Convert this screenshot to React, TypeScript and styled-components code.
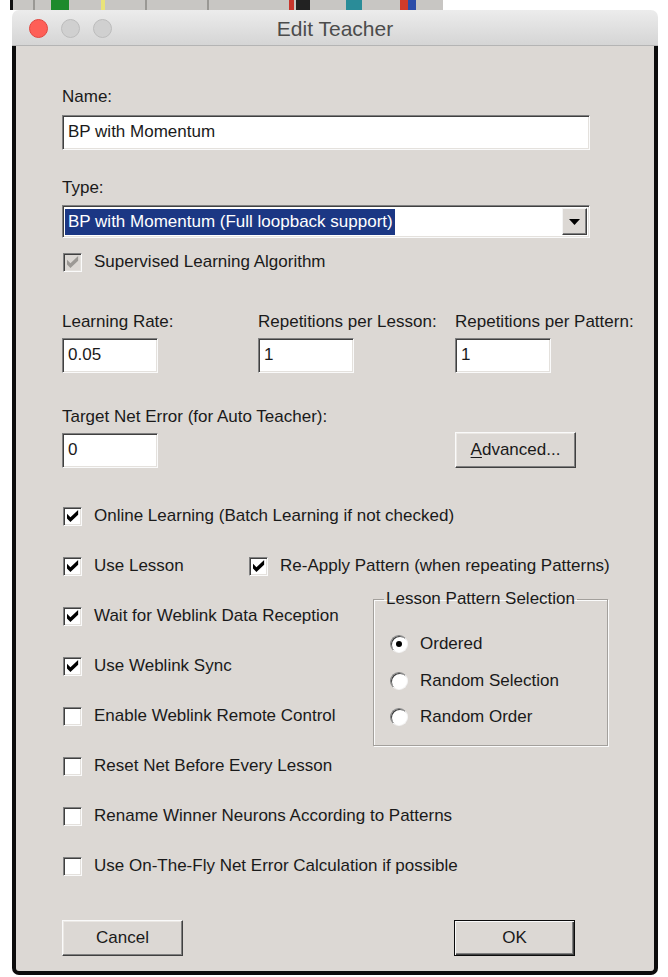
import React from "react";
import styled, { createGlobalStyle, css } from "styled-components";

const GlobalStyle = createGlobalStyle`
  html, body {
    margin: 0;
    background: #fff;
  }
  body {
    font-family: "Liberation Sans", Arial, sans-serif;
    color: #1a1a1a;
  }
`;

const Page = styled.div`
  width: 668px;
  height: 977px;
  overflow: hidden;
`;

// strip of the window sitting behind the dialog
const Backdrop = styled.div`
  display: flex;
  height: 10px;
  width: 430px;
  margin-left: 10px;
  background: #c8c6c3;
  border-left: 3px solid #111;
`;

const Tile = styled.span<{ $color: string; $w: number; $gap: number }>`
  width: ${(p) => p.$w}px;
  margin-left: ${(p) => p.$gap}px;
  background: ${(p) => p.$color};
`;

const Window = styled.div`
  width: 646px;
  margin-left: 12px;
  display: flex;
  flex-direction: column;
`;

const TitleBar = styled.div`
  height: 35px;
  display: grid;
  grid-template-columns: 1fr auto 1fr;
  align-items: center;
  border-radius: 7px 7px 0 0;
  background: linear-gradient(#ececec, #d5d5d5);
  border-bottom: 1px solid #b4b4b4;
`;

const Lights = styled.div`
  display: flex;
  gap: 13px;
  padding: 1px 0 0 17px;
`;

const Light = styled.span<{ $color: string; $edge: string }>`
  width: 19px;
  height: 19px;
  box-sizing: border-box;
  border-radius: 50%;
  background: ${(p) => p.$color};
  border: 1px solid ${(p) => p.$edge};
`;

const Title = styled.div`
  font-family: "Liberation Sans", Arial, sans-serif;
  font-size: 21px;
  color: #4c4c4c;
  padding-top: 2px;
`;

const Body = styled.div`
  height: 929px;
  box-sizing: border-box;
  padding: 41px 0 0 46px;
  background: #dcd8d4;
  border: 4px solid #0c0c0c;
  border-top: none;
  border-radius: 0 0 7px 7px;
  display: flex;
  flex-direction: column;
`;

const Block = styled.div<{ $top: number; $gap?: number }>`
  display: flex;
  flex-direction: column;
  margin-top: ${(p) => p.$top}px;
  gap: ${(p) => p.$gap ?? 0}px;
`;

const Label = styled.div`
  font-size: 17px;
  line-height: 20px;
  white-space: nowrap;
`;

const sunken = css`
  box-sizing: border-box;
  background: #fff;
  border: 1px solid;
  border-color: #808080 #fafafa #fafafa #808080;
  box-shadow: inset 1px 1px #404040, inset -1px -1px #e4e1dd;
`;

const TextField = styled.input<{ $width: number }>`
  ${sunken};
  width: ${(p) => p.$width}px;
  height: 35px;
  padding: 0 0 2px 5px;
  font-family: "Liberation Sans", Arial, sans-serif;
  font-size: 17px;
  color: #1a1a1a;
  outline: none;
`;

const Combo = styled.div`
  ${sunken};
  width: 528px;
  height: 33px;
  display: flex;
  align-items: center;
  justify-content: space-between;
  padding: 0 2px;
`;

const Selected = styled.span`
  background: #1b3784;
  color: #fff;
  font-size: 17px;
  line-height: 26px;
  padding: 0 2px 0 3px;
`;

const DropButton = styled.span`
  width: 25px;
  height: 27px;
  box-sizing: border-box;
  display: flex;
  align-items: center;
  justify-content: center;
  background: #dcd8d4;
  border: 1px solid;
  border-color: #f4f4f4 #404040 #404040 #f4f4f4;
  box-shadow: inset -1px -1px #808080;
`;

const CheckRow = styled.label<{ $height: number; $width?: number }>`
  display: flex;
  align-items: center;
  gap: 12px;
  height: ${(p) => p.$height}px;
  width: ${(p) => (p.$width ? `${p.$width}px` : "auto")};
  padding-left: 1px;
  font-size: 17px;
  white-space: nowrap;
`;

const Box = styled.span<{ $disabled?: boolean }>`
  ${sunken};
  width: 19px;
  height: 19px;
  flex: none;
  display: flex;
  align-items: center;
  justify-content: center;
  background: ${(p) => (p.$disabled ? "#dcd8d4" : "#fff")};
`;

const Columns = styled.div`
  display: grid;
  grid-template-columns: 196px 197px auto;
  margin-top: 38px;
`;

const Column = styled.div`
  display: flex;
  flex-direction: column;
  gap: 6px;
`;

const ErrorRow = styled.div`
  display: grid;
  grid-template-columns: 393px auto;
  align-items: end;
  margin-top: 34px;
`;

const Button = styled.button<{ $default?: boolean }>`
  width: 121px;
  height: 36px;
  box-sizing: border-box;
  background: #dcd8d4;
  font-family: "Liberation Sans", Arial, sans-serif;
  font-size: 17px;
  color: #1a1a1a;
  padding: 0;
  border: 1px solid;
  border-color: #fafafa #404040 #404040 #fafafa;
  box-shadow: inset -1px -1px #808080, inset 1px 1px #ebe8e4;

  ${(p) =>
    p.$default &&
    css`
      border-color: #0c0c0c;
      box-shadow: inset 1px 1px #fafafa, inset -1px -1px #404040,
        inset -2px -2px #808080;
    `}

  & u {
    text-decoration-thickness: 1px;
    text-underline-offset: 2px;
  }
`;

const Checks = styled.div`
  display: flex;
  flex-direction: column;
  margin-top: 23px;
`;

const Line = styled.div<{ $height: number }>`
  display: flex;
  align-items: flex-start;
  height: ${(p) => p.$height}px;
`;

const SideColumn = styled.div`
  width: 311px;
  display: flex;
  flex-direction: column;
`;

const GroupBox = styled.fieldset`
  width: 235px;
  height: 157px;
  box-sizing: border-box;
  flex: none;
  margin: -2px 0 0 0;
  padding: 17px 0 0 16px;
  border: 1px solid #a3a09c;
  box-shadow: inset 1px 1px #fbfbfb, 1px 1px #fbfbfb;
  display: flex;
  flex-direction: column;
`;

const Legend = styled.legend`
  font-size: 17px;
  line-height: 20px;
  padding: 0 2px;
  margin-left: -6px;
`;

const RadioRow = styled.label`
  display: flex;
  align-items: center;
  gap: 12px;
  height: 36.5px;
  font-size: 17px;
  white-space: nowrap;
`;

const Radio = styled.span`
  width: 18px;
  height: 18px;
  box-sizing: border-box;
  border-radius: 50%;
  background: #fff;
  border: 1px solid;
  border-color: #808080 #f4f4f4 #f4f4f4 #808080;
  box-shadow: inset 1px 1px #404040;
  display: flex;
  align-items: center;
  justify-content: center;
`;

const Dot = styled.span`
  width: 6px;
  height: 6px;
  border-radius: 50%;
  background: #000;
`;

const ButtonBar = styled.div`
  width: 513px;
  display: flex;
  justify-content: space-between;
  margin-top: 29px;
`;

const Tick = ({ color = "#000" }: { color?: string }) => (
  <svg width="12" height="12" viewBox="0 0 7 7">
    <polygon points="0,2.2 2,4.2 6.5,0 6.5,2.8 2,7 0,5" fill={color} />
  </svg>
);

type CheckProps = {
  label: string;
  checked?: boolean;
  height?: number;
  width?: number;
};

const Check = ({ label, checked, height = 50, width }: CheckProps) => (
  <CheckRow $height={height} $width={width}>
    <Box>{checked && <Tick />}</Box>
    {label}
  </CheckRow>
);

const Option = ({ label, on }: { label: string; on?: boolean }) => (
  <RadioRow>
    <Radio>{on && <Dot />}</Radio>
    {label}
  </RadioRow>
);

const App = () => {
  return (
    <Page>
      <GlobalStyle />
      <Backdrop>
        <Tile $color="#9a9894" $w={2} $gap={20} />
        <Tile $color="#1c8a2c" $w={18} $gap={16} />
        <Tile $color="#e9e37a" $w={4} $gap={32} />
        <Tile $color="#9a9894" $w={2} $gap={40} />
        <Tile $color="#9a9894" $w={2} $gap={60} />
        <Tile $color="#c8352c" $w={5} $gap={80} />
        <Tile $color="#222" $w={14} $gap={2} />
        <Tile $color="#2a8c98" $w={16} $gap={36} />
        <Tile $color="#d23b2a" $w={8} $gap={38} />
        <Tile $color="#2b4ca8" $w={8} $gap={0} />
      </Backdrop>
      <Window>
        <TitleBar>
          <Lights>
            <Light $color="#fe5f57" $edge="#e2463f" />
            <Light $color="#d0d0d0" $edge="#bcbcbc" />
            <Light $color="#d0d0d0" $edge="#bcbcbc" />
          </Lights>
          <Title>Edit Teacher</Title>
          <span />
        </TitleBar>
        <Body>
          <Block $top={0} $gap={8}>
            <Label>Name:</Label>
            <TextField $width={528} defaultValue="BP with Momentum" readOnly />
          </Block>

          <Block $top={28} $gap={7}>
            <Label>Type:</Label>
            <Combo>
              <Selected>BP with Momentum (Full loopback support)</Selected>
              <DropButton>
                <svg width="11" height="6" viewBox="0 0 11 6">
                  <polygon points="0,0 11,0 5.5,6" fill="#000" />
                </svg>
              </DropButton>
            </Combo>
          </Block>

          <Block $top={12}>
            <CheckRow $height={24}>
              <Box $disabled>
                <Tick color="#9c9995" />
              </Box>
              Supervised Learning Algorithm
            </CheckRow>
          </Block>

          <Columns>
            <Column>
              <Label>Learning Rate:</Label>
              <TextField $width={96} defaultValue="0.05" readOnly />
            </Column>
            <Column>
              <Label>Repetitions per Lesson:</Label>
              <TextField $width={96} defaultValue="1" readOnly />
            </Column>
            <Column>
              <Label>Repetitions per Pattern:</Label>
              <TextField $width={96} defaultValue="1" readOnly />
            </Column>
          </Columns>

          <ErrorRow>
            <Column>
              <Label>Target Net Error (for Auto Teacher):</Label>
              <TextField $width={96} defaultValue="0" readOnly />
            </Column>
            <Button>
              <u>A</u>dvanced...
            </Button>
          </ErrorRow>

          <Checks>
            <Check label="Online Learning (Batch Learning if not checked)" checked />
            <Line $height={50}>
              <Check label="Use Lesson" checked width={185} />
              <Check label="Re-Apply Pattern (when repeating Patterns)" checked />
            </Line>
            <Line $height={150}>
              <SideColumn>
                <Check label="Wait for Weblink Data Reception" checked />
                <Check label="Use Weblink Sync" checked />
                <Check label="Enable Weblink Remote Control" />
              </SideColumn>
              <GroupBox>
                <Legend>Lesson Pattern Selection</Legend>
                <Option label="Ordered" on />
                <Option label="Random Selection" />
                <Option label="Random Order" />
              </GroupBox>
            </Line>
            <Check label="Reset Net Before Every Lesson" />
            <Check label="Rename Winner Neurons According to Patterns" />
            <Check label="Use On-The-Fly Net Error Calculation if possible" />
          </Checks>

          <ButtonBar>
            <Button>Cancel</Button>
            <Button $default>OK</Button>
          </ButtonBar>
        </Body>
      </Window>
    </Page>
  );
};

export default App;
